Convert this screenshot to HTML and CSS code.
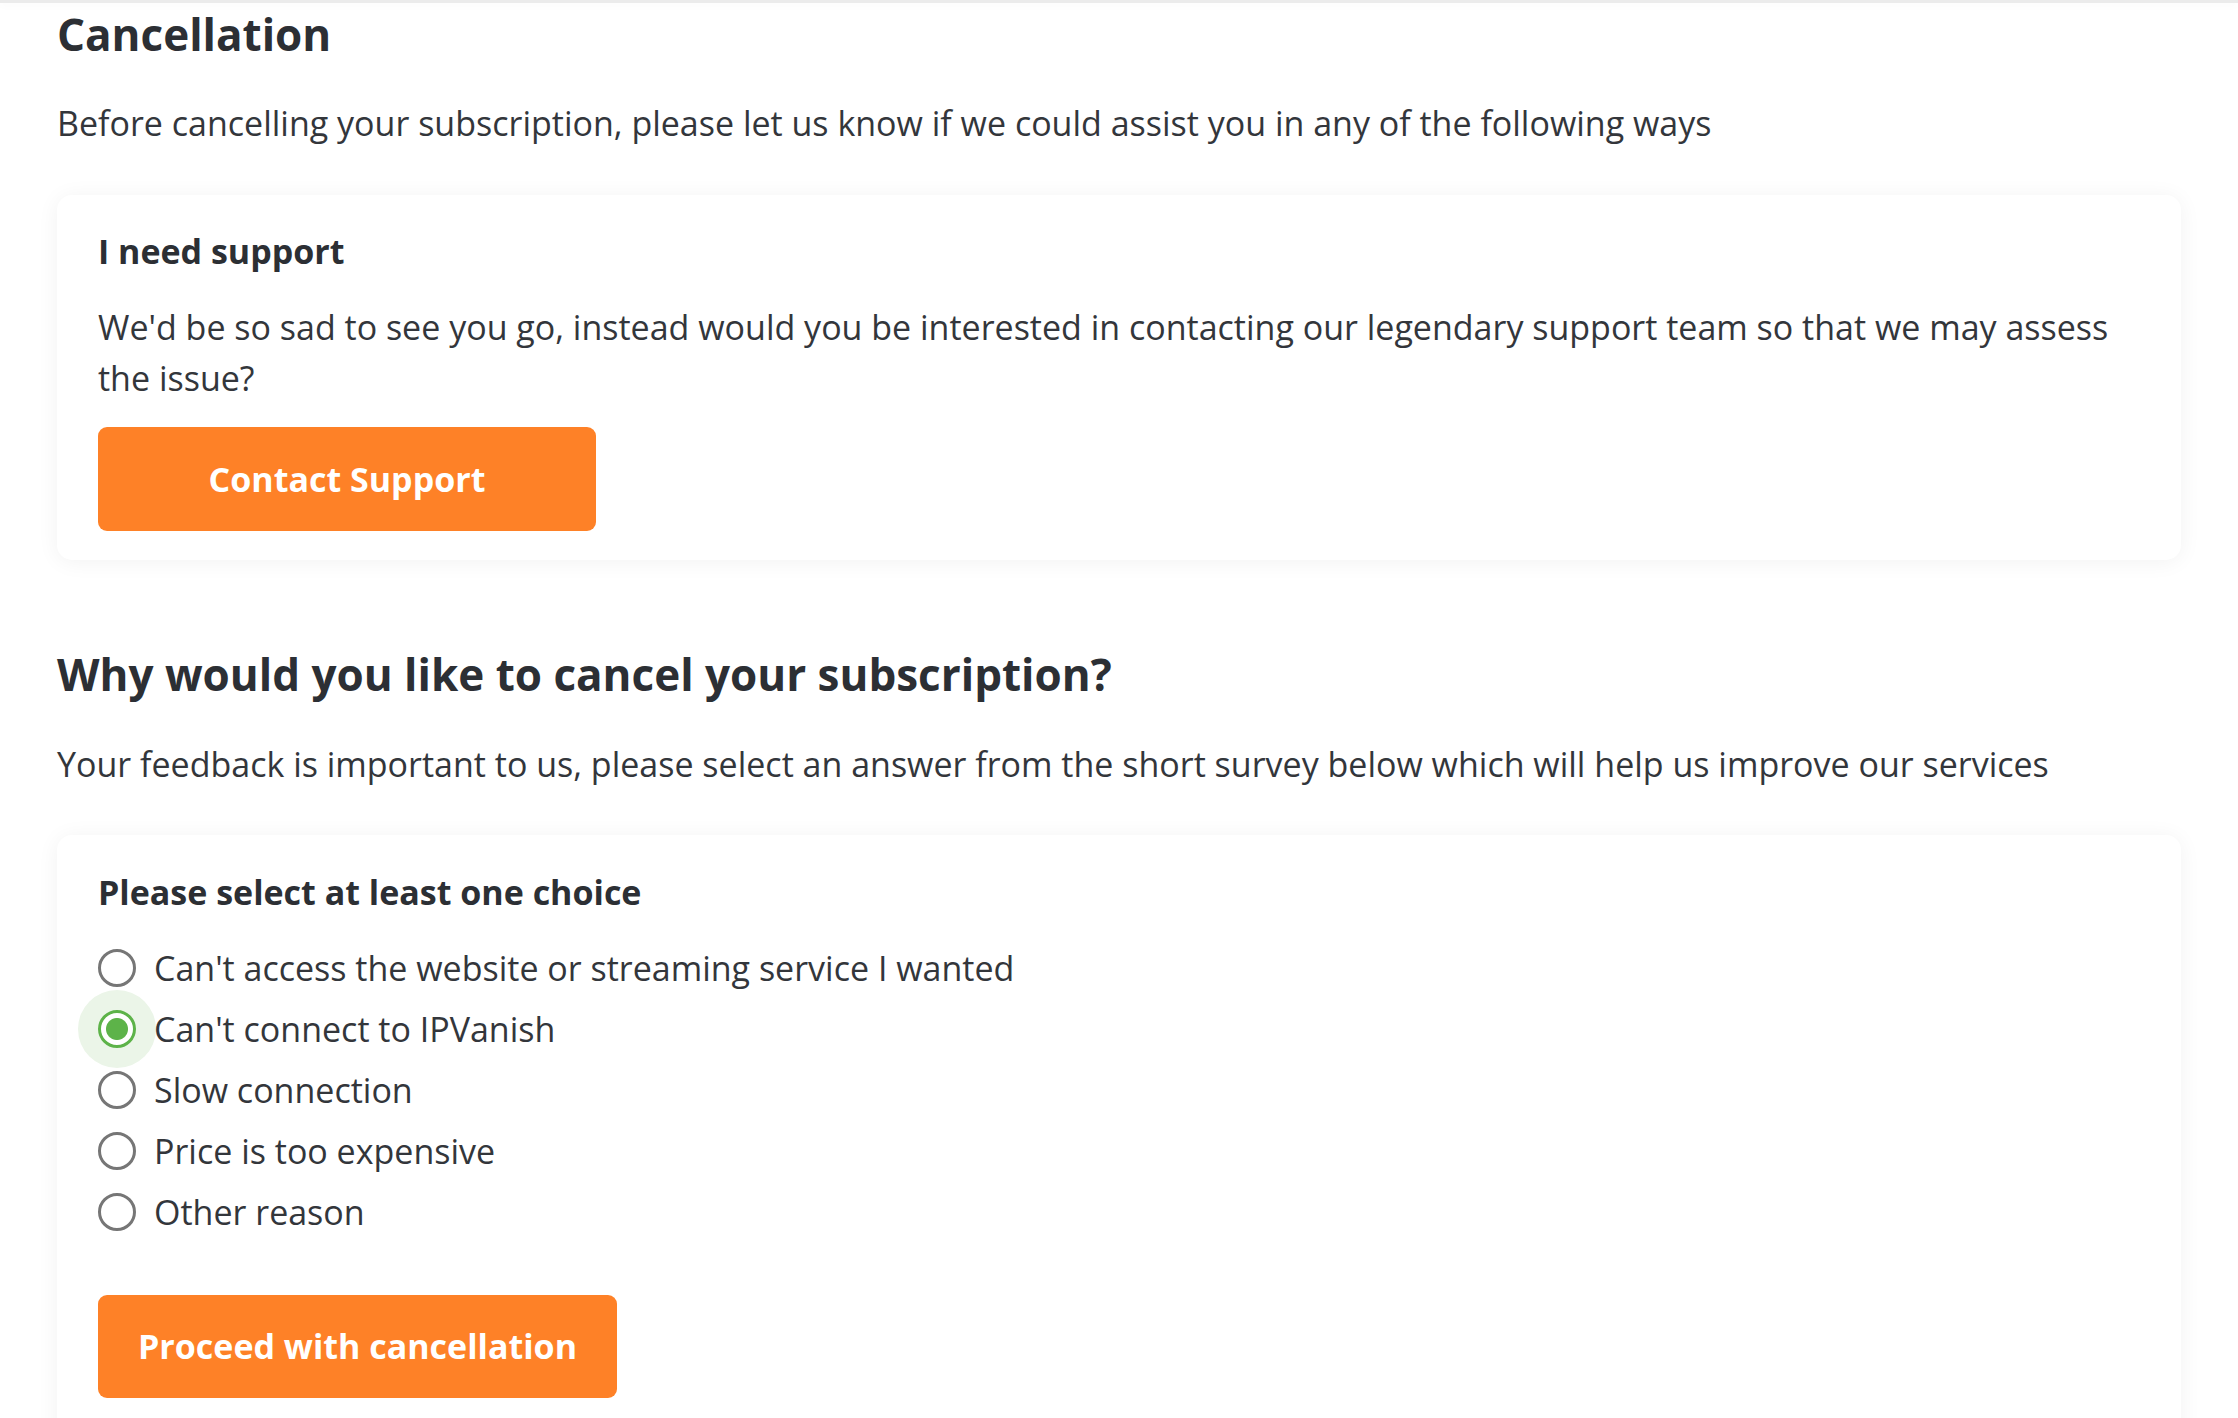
FILE: index.html
```html
<!DOCTYPE html>
<html lang="en">
<head>
<meta charset="utf-8">
<title>Cancellation</title>
<link rel="stylesheet" href="styles.css">
</head>
<body>
<div class="topbar"></div>
<main class="page">
  <h1 class="title">Cancellation</h1>
  <p class="lead">Before cancelling your subscription, please let us know if we could assist you in any of the following ways</p>

  <section class="card card-support">
    <h3 class="card-title">I need support</h3>
    <p class="card-text">We'd be so sad to see you go, instead would you be interested in contacting our legendary support team so that we may assess the issue?</p>
    <button class="btn btn-wide" type="button">Contact Support</button>
  </section>

  <h2 class="title title-2">Why would you like to cancel your subscription?</h2>
  <p class="lead">Your feedback is important to us, please select an answer from the short survey below which will help us improve our services</p>

  <section class="card card-survey">
    <h3 class="card-title">Please select at least one choice</h3>
    <div class="choices">
      <label class="choice"><input type="radio" name="reason" class="radio"><span>Can't access the website or streaming service I wanted</span></label>
      <label class="choice"><input type="radio" name="reason" class="radio" checked><span>Can't connect to IPVanish</span></label>
      <label class="choice"><input type="radio" name="reason" class="radio"><span>Slow connection</span></label>
      <label class="choice"><input type="radio" name="reason" class="radio"><span>Price is too expensive</span></label>
      <label class="choice"><input type="radio" name="reason" class="radio"><span>Other reason</span></label>
    </div>
    <button class="btn" type="button">Proceed with cancellation</button>
  </section>
</main>
</body>
</html>
```

FILE: styles.css
```css
* { box-sizing: border-box; }

html, body {
  margin: 0;
  padding: 0;
  background: #ffffff;
}

body {
  font-family: "Open Sans", "Noto Sans", "Liberation Sans", sans-serif;
  color: #303338;
  overflow: hidden;
  height: 1418px;
}

.topbar {
  height: 3px;
  background: #ebebeb;
  box-shadow: 0 2px 8px rgba(0, 0, 0, 0.04);
}

.page {
  padding: 0 57px;
}

.title {
  margin: 4.5px 0 0;
  font-size: 44px;
  line-height: 1.2;
  font-weight: 700;
  color: #2c2f34;
}

.title-2 {
  margin-top: 88px;
}

.lead {
  margin: 38px 0 0;
  font-size: 34px;
  line-height: 1.5;
  font-weight: 400;
  color: #33363b;
}

.card {
  margin-top: 46px;
  background: #ffffff;
  border-radius: 15px;
  box-shadow: 0 2px 22px rgba(0, 0, 0, 0.055);
  padding: 36px 41px 29px;
}

.card-survey {
  margin-top: 45px;
  padding-top: 37px;
  padding-bottom: 60px;
}

.card-title {
  margin: 0;
  font-size: 34px;
  line-height: 1.2;
  font-weight: 700;
  color: #2c2f34;
}

.card-text {
  margin: 30px 0 0;
  font-size: 34px;
  line-height: 1.5;
  color: #33363b;
}

.btn {
  display: flex;
  align-items: center;
  justify-content: center;
  height: 104px;
  margin-top: 23px;
  padding: 0 40px;
  border: none;
  border-radius: 9px;
  background: #fe8127;
  color: #ffffff;
  font-family: "Open Sans", "Noto Sans", "Liberation Sans", sans-serif;
  font-size: 34px;
  font-weight: 700;
  cursor: pointer;
}

.btn-wide {
  min-width: 498px;
}

.card-survey .btn {
  margin-top: 52px;
  height: 103px;
}

.choices {
  display: flex;
  flex-direction: column;
  margin-top: 25px;
}

.choice {
  display: flex;
  align-items: center;
  gap: 18px;
  height: 61px;
  font-size: 34px;
  line-height: 1.5;
  color: #33363b;
  cursor: pointer;
}

.radio {
  -webkit-appearance: none;
  appearance: none;
  flex: 0 0 auto;
  width: 38px;
  height: 38px;
  margin: 0;
  border: 3.5px solid #767676;
  border-radius: 50%;
  background: #ffffff;
}

.radio:checked {
  border-color: #5db349;
  background: radial-gradient(circle, #5db349 0 10.5px, #ffffff 11.5px);
  box-shadow: 0 0 0 20px #ebf5e8;
}
```
